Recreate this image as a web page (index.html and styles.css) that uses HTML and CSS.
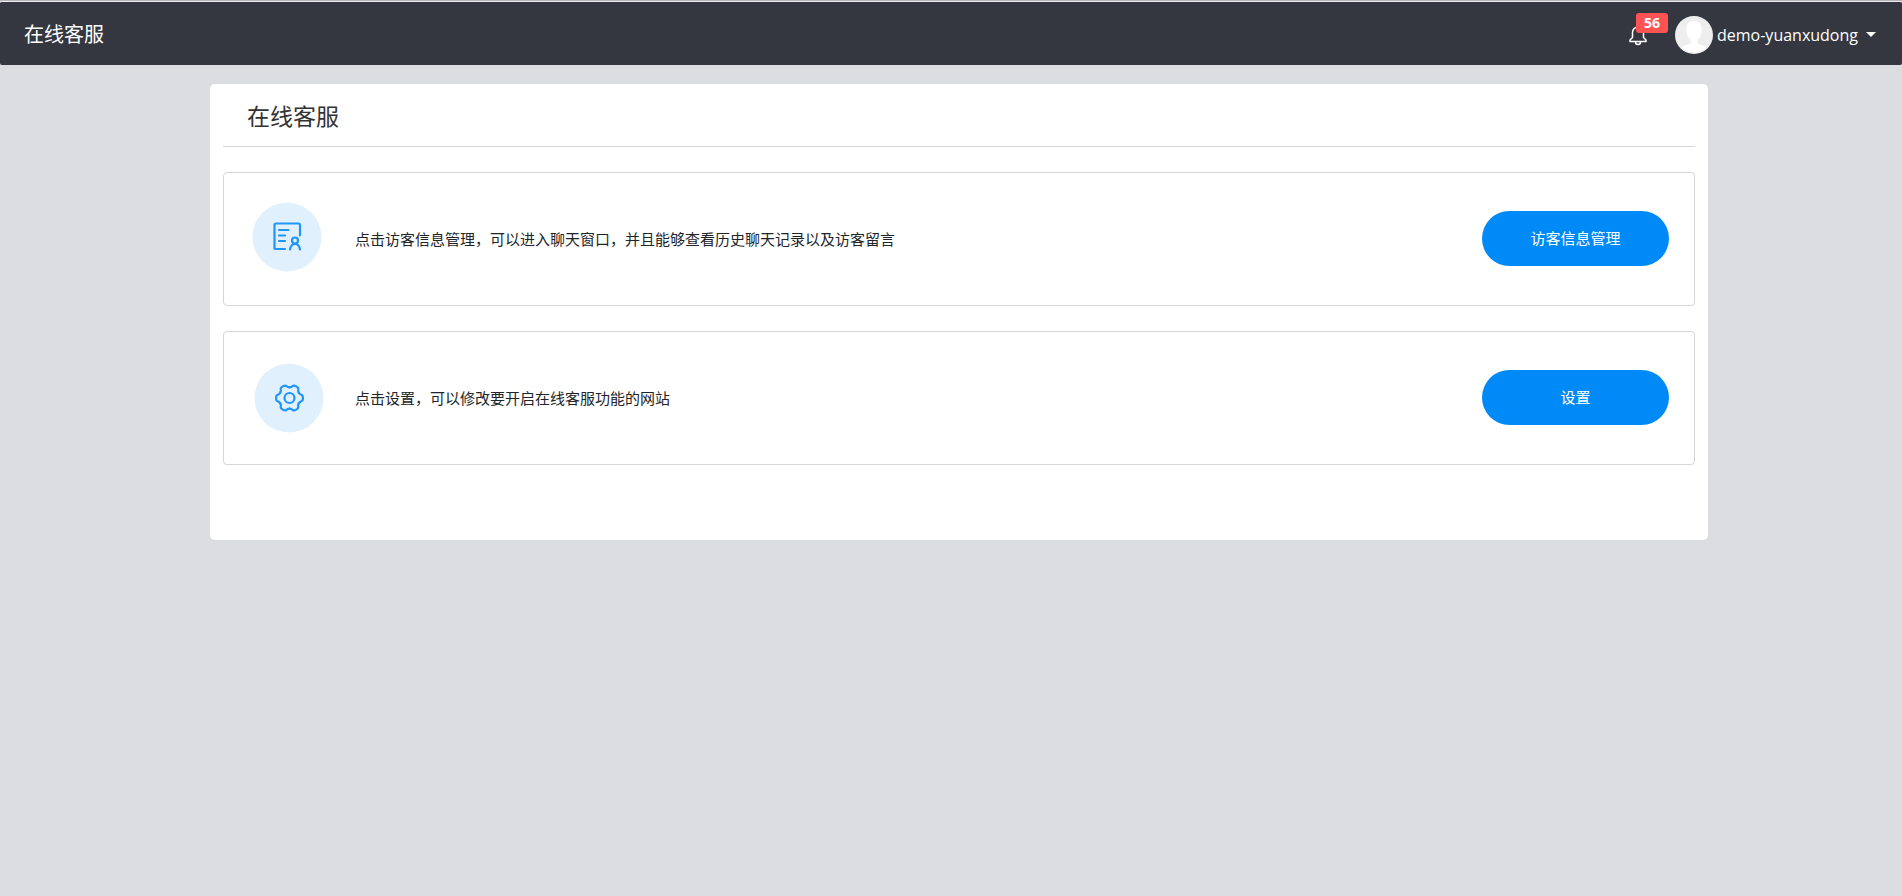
FILE: index.html
```html
<!DOCTYPE html>
<html lang="zh-CN">
<head>
<meta charset="utf-8">
<title>在线客服</title>
<link rel="stylesheet" href="styles.css">
</head>
<body>
<header class="navbar">
  <a class="brand" href="#">在线客服</a>
  <div class="tools">
    <button class="bell" type="button" aria-label="通知">
      <svg class="bell-icon" viewBox="0 0 18 22" aria-hidden="true"><path d="M9 1v2M1 17.500V16L3.500 13.500V8.500a5.500 5.500 0 0 1 11 0V13.500L17 16v1.500zM6.500 18a2.500 2.500 0 0 0 5 0"/></svg>
      <span class="badge">56</span>
    </button>
    <button class="user" type="button">
      <svg class="avatar" viewBox="0 0 38 38" aria-hidden="true"><circle cx="19" cy="19" r="19" fill="#eee"/><path fill="#fff" d="M19 5c-6 0-8 4-7.500 9 0 5 2 8 4 10v3c-2 2-6 2-9 4.500a18 18 0 0 0 25 0c-3-2.500-7-2.500-9-4.500v-3c2-2 4-5 4-10 .5-5-1.500-9-7.500-9z"/></svg>
      <span class="user-name">demo-yuanxudong</span>
      <span class="caret"></span>
    </button>
  </div>
</header>
<main class="card">
  <h1 class="title">在线客服</h1>
  <section class="panel">
    <svg class="icon" viewBox="0 0 70 70" aria-hidden="true">
      <circle cx="34" cy="33" r="34.500" class="disc"/>
      <path class="line" d="M32 45H23a1.500 1.500 0 0 1-1.500-1.500V21a1.500 1.500 0 0 1 1.500-1.500h22.500A1.500 1.500 0 0 1 47 21v10.500M26 26h9.500M26 31.500h6M26 37h6"/>
      <circle class="line" cx="42" cy="36.500" r="3"/>
      <path class="line" d="M37 45.500c.5-3 2.500-5.500 5-5.500s4.500 2.500 5 5.500"/>
    </svg>
    <p class="text">点击访客信息管理，可以进入聊天窗口，并且能够查看历史聊天记录以及访客留言</p>
    <button class="action" type="button">访客信息管理</button>
  </section>
  <section class="panel">
    <svg class="icon" viewBox="0 0 70 70" aria-hidden="true">
      <defs><path id="tooth" d="M9.300-5.300Q10.300-3.600 11.800-3.300C14-2.700 14 2.700 11.800 3.300Q10.300 3.600 9.300 5.300"/></defs>
      <circle cx="36" cy="35" r="34.500" class="disc"/>
      <g class="line" transform="translate(36.500 35)">
        <circle r="5"/>
        <use href="#tooth"/>
        <use href="#tooth" transform="rotate(60)"/>
        <use href="#tooth" transform="rotate(120)"/>
        <use href="#tooth" transform="rotate(180)"/>
        <use href="#tooth" transform="rotate(240)"/>
        <use href="#tooth" transform="rotate(300)"/>
      </g>
    </svg>
    <p class="text">点击设置，可以修改要开启在线客服功能的网站</p>
    <button class="action" type="button">设置</button>
  </section>
</main>
</body>
</html>
```
FILE: styles.css
```css
* { box-sizing: border-box; }
body {
  margin: 0;
  min-height: 100vh;
  border-top: 1px solid #b5b5b9;
  background: #dcdde1;
  color: #212529;
  font: 15px/24px "Open Sans", "Noto Sans CJK SC", sans-serif;
}
button { border: 0; padding: 0; font: inherit; color: inherit; background: none; cursor: pointer; }
.navbar {
  display: flex;
  align-items: center;
  justify-content: space-between;
  height: 64px;
  padding: 2px 26px 0 24px;
  border-top: 1px solid #ececef;
  border-radius: 2px;
  background: #353740;
  color: #fff;
}
.brand { color: #fff; font-size: 20px; text-decoration: none; }
.tools { display: flex; align-items: center; gap: 28px; }
.bell { position: relative; display: block; }
.bell-icon { display: block; width: 18px; height: 22px; fill: none; stroke: #fff; stroke-width: 1.500; stroke-linejoin: round; stroke-linecap: round; }
.badge {
  position: absolute;
  top: -11px;
  left: 7px;
  width: 32px;
  border-radius: 3px;
  background: #ff5353;
  font-size: 14px;
  line-height: 20px;
  font-weight: 700;
}
.user { display: flex; align-items: center; gap: 4px; font-size: 16px; }
.avatar { width: 38px; height: 38px; }
.caret { margin-left: 4px; border: 5px solid transparent; border-top-color: #fff; border-bottom: 0; }
.card {
  display: flex;
  flex-direction: column;
  gap: 25px;
  margin: 19px 194px 0 210px;
  padding: 0 13px 75px;
  border-radius: 5px;
  background: #fff;
}
.title {
  margin: 0;
  padding: 16px 24px 14px;
  border-bottom: 1px solid #d5d6d8;
  color: #333;
  font-size: 23px;
  line-height: 32px;
  font-weight: 400;
}
.panel {
  display: flex;
  align-items: center;
  height: 134px;
  padding: 0 25px 0 29px;
  border: 1px solid #d5d6d8;
  border-radius: 4px;
}
.icon { flex: none; width: 70px; height: 70px; overflow: visible; }
.disc { fill: #e1f0fd; }
.line { fill: none; stroke: #1e96fa; stroke-width: 2.200; stroke-linecap: round; stroke-linejoin: round; }
.text { flex: 1; margin: 0 0 0 32px; }
.action { width: 187px; height: 55px; margin-bottom: 2px; border-radius: 28px; background: #008af7; color: #fff; }
```
